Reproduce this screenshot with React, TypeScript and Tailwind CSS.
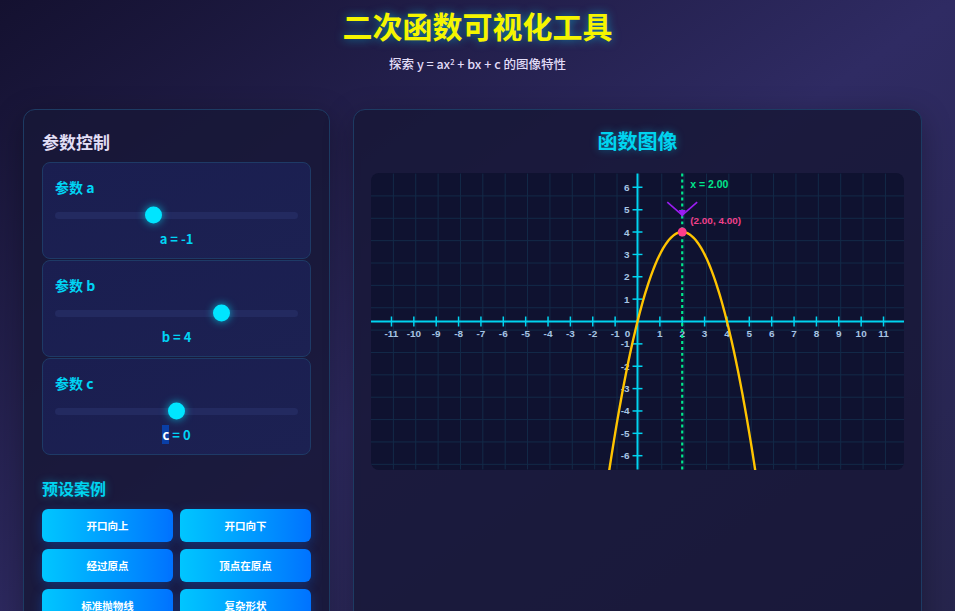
import React from 'react';

const W = 535;
const H = 297;
const S = 22.45;
const OX = W / 2;
const OY = H / 2;

const params = [
  { key: 'a', value: -1, min: -5, max: 5 },
  { key: 'b', value: 4, min: -10, max: 10 },
  { key: 'c', value: 0, min: -10, max: 10 },
];

const presets = ['开口向上', '开口向下', '经过原点', '顶点在原点', '标准抛物线', '复杂形状'];

function Slider({ value, min, max }: { value: number; min: number; max: number }) {
  const pct = (value - min) / (max - min);
  return (
    <div className="relative h-5 mt-2 flex items-center">
      <div className="w-full h-[7px] rounded-full bg-[#232a60]" />
      <div
        className="absolute top-1/2 -translate-y-1/2 w-[17px] h-[17px] rounded-full bg-[#00e5ff] shadow-[0_0_8px_rgba(0,229,255,0.7)]"
        style={{ left: `calc(${pct} * (100% - 17px))` }}
      />
    </div>
  );
}

function Chart() {
  const a = -1, b = 4, c = 0;
  const vx = -b / (2 * a);
  const vy = a * vx * vx + b * vx + c;
  const px = (x: number) => OX + x * S;
  const py = (y: number) => OY - y * S;

  const pts: string[] = [];
  for (let x = -13; x <= 13; x += 0.05) {
    const y = a * x * x + b * x + c;
    if (y < -20) continue;
    pts.push(`${px(x).toFixed(2)},${py(y).toFixed(2)}`);
  }

  const gridV: number[] = [];
  for (let g = S; g < W; g += S) gridV.push(g);
  const gridH: number[] = [];
  for (let g = S; g < H; g += S) gridH.push(g);

  const xs: number[] = [];
  for (let i = -11; i <= 11; i++) xs.push(i);
  const ys: number[] = [];
  for (let i = -6; i <= 6; i++) if (i !== 0) ys.push(i);

  const vxp = px(vx);
  const vyp = py(vy);

  return (
    <svg viewBox={`0 0 ${W} ${H}`} className="block w-full h-[297px] rounded-lg bg-[#0f1230]" style={{ fontFamily: '"Liberation Sans", Arial, sans-serif' }}>
      {gridV.map(g => (
        <line key={'v' + g} x1={g} y1={0} x2={g} y2={H} stroke="#132a48" strokeWidth={1} />
      ))}
      {gridH.map(g => (
        <line key={'h' + g} x1={0} y1={g} x2={W} y2={g} stroke="#132a48" strokeWidth={1} />
      ))}

      {/* axes */}
      <line x1={0} y1={OY} x2={W} y2={OY} stroke="#00d4f0" strokeWidth={2} />
      <line x1={OX} y1={0} x2={OX} y2={H} stroke="#00d4f0" strokeWidth={2} />

      {xs.map(i => (
        <g key={'x' + i}>
          {i !== 0 && <line x1={px(i)} y1={OY - 5} x2={px(i)} y2={OY + 5} stroke="#00d4f0" strokeWidth={1.5} />}
          <text
            x={i === 0 ? OX - 10 : px(i)}
            y={OY + 16}
            textAnchor="middle"
            fontSize={10}
            fontWeight={700}
            fill="#a6c4e4"
          >
            {i}
          </text>
        </g>
      ))}
      {ys.map(i => (
        <g key={'y' + i}>
          <line x1={OX - 5} y1={py(i)} x2={OX + 5} y2={py(i)} stroke="#00d4f0" strokeWidth={1.5} />
          <text x={OX - 8} y={py(i) + 3.5} textAnchor="end" fontSize={10} fontWeight={700} fill="#a6c4e4">
            {i}
          </text>
        </g>
      ))}

      {/* axis of symmetry */}
      <line x1={vxp} y1={0} x2={vxp} y2={H} stroke="#00e68c" strokeWidth={2.2} strokeDasharray="3 3" />
      <text x={vxp + 8} y={14.5} fontSize={10.5} fontWeight={700} fill="#00e68c">
        x = {vx.toFixed(2)}
      </text>

      {/* parabola */}
      <polyline points={pts.join(' ')} fill="none" stroke="#ffc400" strokeWidth={2.4} />

      {/* vertex marker */}
      <line x1={vxp - 15} y1={vyp - 30} x2={vxp} y2={vyp - 17} stroke="#9b1cf2" strokeWidth={1.6} />
      <line x1={vxp + 15} y1={vyp - 30} x2={vxp} y2={vyp - 17} stroke="#9b1cf2" strokeWidth={1.6} />
      <polygon points={`${vxp - 3.5},${vyp - 22} ${vxp + 3.5},${vyp - 22} ${vxp},${vyp - 14.5}`} fill="#9b1cf2" />
      <circle cx={vxp} cy={vyp} r={4.5} fill="#ff3d8b" />
      <text x={vxp + 8} y={vyp - 8} fontSize={10} fontWeight={700} fill="#f0408a">
        ({vx.toFixed(2)}, {vy.toFixed(2)})
      </text>
    </svg>
  );
}

export default function App() {
  return (
    <div
      className="min-h-screen bg-linear-to-br from-[#141130] via-[#2f2b63] to-[#25244a] text-white"
      style={{ fontFamily: '"Noto Sans CJK SC", "Noto Sans", sans-serif' }}
    >
      {/* Header */}
      <div className="pt-[6px] text-center">
        <h1 className="text-[30px] leading-[38px] font-bold text-[#f5f500] [text-shadow:0_0_10px_rgba(0,220,255,0.55)]">
          二次函数可视化工具
        </h1>
        <p className="mt-[11px] text-[12.5px] leading-[17px] font-medium text-[#e2dcf8]">
          探索 y = ax<sup className="text-[7.5px]">2</sup> + bx + c 的图像特性
        </p>
      </div>

      <div className="flex items-stretch gap-[23px] pl-[23px] pr-[33px] mt-[37px] pb-8">
        {/* Controls */}
        <div className="w-[307px] shrink-0 rounded-xl border border-[#1d3b63] bg-[#171737]/85 px-[18px] pt-[20px] pb-[19px] shadow-[0_8px_30px_rgba(0,0,0,0.3)]">
          <h2 className="text-[17px] leading-[24px] font-bold text-[#e2def5] mb-[8px]">参数控制</h2>

          <div className="flex flex-col gap-px">
            {params.map(p => (
              <div
                key={p.key}
                className="rounded-lg border border-[#1e3a66] bg-linear-to-br from-[#1a1e50] to-[#1c2152] px-3 pt-[14px] pb-[10px]"
              >
                <div className="text-[14px] leading-[20px] font-bold text-[#00d4f5]">参数 {p.key}</div>
                <Slider value={p.value} min={p.min} max={p.max} />
                <div className="mt-[5px] text-center text-[13px] leading-[18px] font-bold text-[#00d4f5]">
                  {p.key === 'c' ? (
                    <>
                      <span className="bg-[#0a3fa6] text-white">c</span> = {p.value}
                    </>
                  ) : (
                    <>
                      {p.key} = {p.value}
                    </>
                  )}
                </div>
              </div>
            ))}
          </div>

          <h2 className="mt-[22px] mb-[10px] text-[16px] leading-[22px] font-bold text-[#00d4f0] [text-shadow:0_0_8px_rgba(0,212,255,0.4)]">
            预设案例
          </h2>
          <div className="grid grid-cols-2 gap-[7px] gap-y-[7px]">
            {presets.map(label => (
              <button
                key={label}
                className="h-[33px] rounded-md bg-linear-to-r from-[#00c6ff] to-[#0072ff] text-[10.5px] font-bold text-white shadow-[0_3px_12px_rgba(0,114,255,0.3)]"
              >
                {label}
              </button>
            ))}
          </div>
        </div>

        {/* Chart panel */}
        <div className="flex-1 rounded-xl border border-[#1d3b63] bg-[#171737]/85 p-[17px] shadow-[0_8px_30px_rgba(0,0,0,0.3)]">
          <h2 className="text-center text-[20px] leading-[28px] font-bold text-[#00d4f0] [text-shadow:0_0_8px_rgba(0,212,255,0.4)] mb-[18px]">
            函数图像
          </h2>
          <Chart />
        </div>
      </div>
    </div>
  );
}
